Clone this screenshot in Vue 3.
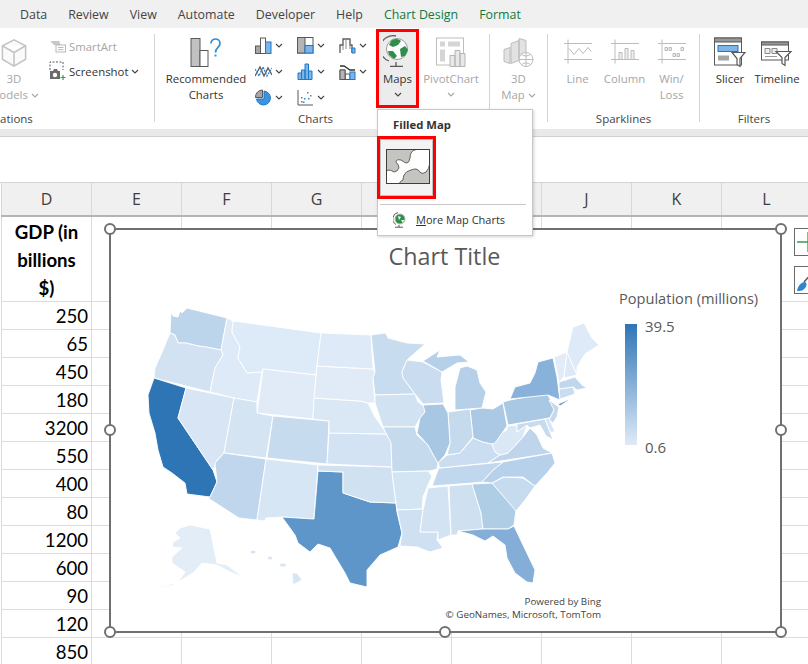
<script setup>
const tabs = [
  { t: 'Data' }, { t: 'Review' }, { t: 'View' }, { t: 'Automate' }, { t: 'Developer' }, { t: 'Help' },
  { t: 'Chart Design', g: true }, { t: 'Format', g: true }
]
const cols = ['D', 'E', 'F', 'G', 'H', 'I', 'J', 'K', 'L']
const values = [250, 65, 450, 180, 3200, 550, 400, 80, 1200, 600, 90, 120, 850]
const states = [
  ['#bdd5eb', '171,312 173,316 178,317 180,311 182,313 187,308 227,318 221,350 206,347 198,346 186,343 178,343 175,335 170,333'],
  ['#d2e2f2', '170,333 175,335 178,343 186,343 198,346 206,347 221,350 223,355 215,368 210,392 154,378 155,368 163,350'],
  ['#2e75b6', '154,378 186,388 178,418 213,470 217,482 210,497 187,494 185,483 172,473 163,467 158,450 155,433 149,413 148,395'],
  ['#d7e5f4', '186,388 234,398 224,453 217,460 213,470 178,418'],
  ['#deeaf7', '227,318 233,321 232,332 240,347 238,358 247,373 262,372 257,402 234,398 210,392 215,368 223,355 221,350'],
  ['#ddeaf7', '233,321 277,327 321,333 316,375 263,369 262,372 247,373 238,358 240,347 232,332'],
  ['#e0ebf7', '263,369 316,375 313,419 257,413'],
  ['#d5e4f3', '234,398 257,402 257,413 273,416 266,458 224,453'],
  ['#c7dbef', '273,416 329,421 327,464 267,458'],
  ['#c0d6ec', '224,453 266,459 257,520 239,518 208,498 210,497 217,482 215,463'],
  ['#d7e6f4', '266,459 318,465 314,519 282,517 266,518 265,521 257,520'],
  ['#5f96c9', '318,471 343,472 343,493 370,502 396,503 397,512 402,533 398,547 380,555 367,570 367,587 350,583 345,573 330,548 318,544 310,552 298,543 295,535 282,517 314,519'],
  ['#d0e1f2', '318,465 392,467 393,480 396,503 370,502 343,493 343,472 318,471'],
  ['#d4e3f3', '329,433 387,434 391,442 392,467 327,464'],
  ['#dae7f5', '314,398 360,401 368,403 375,417 382,427 387,434 329,433 329,421 313,419'],
  ['#e0ebf7', '317,366 373,369 375,372 373,380 375,403 368,403 360,401 314,398'],
  ['#deeaf7', '321,333 371,335 373,369 317,366'],
  ['#c8dcef', '371,335 386,333 388,338 407,343 425,344 407,360 402,372 403,378 415,394 375,395 373,378 375,372'],
  ['#d1e2f2', '375,395 415,394 418,402 425,407 425,412 420,418 415,427 383,427 375,403'],
  ['#c6daee', '383,427 415,427 417,435 428,445 435,458 438,463 437,469 430,471 392,472 391,443'],
  ['#d3e4f3', '392,472 428,471 432,476 428,485 423,497 422,509 397,510 396,503'],
  ['#cee0f1', '397,510 423,509 420,532 438,532 437,540 443,548 430,552 417,547 400,546 402,533'],
  ['#d3e3f3', '428,488 448,486 451,535 438,540 438,532 420,532 423,510'],
  ['#cfe0f1', '449,486 472,484 481,513 483,529 458,531 457,535 451,535'],
  ['#b0cde6', '472,484 492,483 516,510 514,525 508,529 483,529 481,513'],
  ['#84aed7', '458,531 483,529 508,529 514,526 523,545 535,570 533,583 527,582 515,573 507,558 505,545 493,536 485,541 473,535'],
  ['#c7dbef', '492,483 504,477 523,478 535,486 525,500 516,511'],
  ['#b6d1e9', '482,482 492,483 503,477 523,477 535,486 547,473 555,463 552,453 503,462 493,470'],
  ['#c1d7ed', '432,486 438,470 439,468 503,462 493,470 482,482 473,483'],
  ['#cbddf0', '438,463 447,455 460,453 473,438 483,442 492,444 495,452 500,455 488,463 440,468'],
  ['#bed5ec', '488,463 500,455 508,453 523,437 530,428 537,435 543,448 552,453'],
  ['#dae7f5', '492,444 498,435 507,430 507,426 517,425 517,432 527,425 523,437 508,453 500,455 495,452'],
  ['#abc9e4', '470,410 482,408 493,409 503,403 507,426 495,443 492,444 483,442 473,438'],
  ['#c6daee', '448,412 470,409 473,437 460,453 447,455 450,443'],
  ['#a7c7e3', '423,405 443,404 448,413 450,443 445,455 438,463 435,458 428,445 417,433 420,418 425,412'],
  ['#c9dcf0', '402,372 407,360 423,362 442,372 441,380 444,403 423,404 415,394 403,378'],
  ['#b6d0e9', '423,361 440,350 437,357 460,355 469,362 457,363 442,372'],
  ['#b6d0e9', '455,387 460,368 467,366 477,370 480,383 486,392 482,408 455,410'],
  ['#a9c8e4', '503,402 510,400 547,393 550,399 555,408 550,418 508,425'],
  ['#88b2da', '510,399 515,387 530,383 535,373 538,362 553,358 557,377 560,400 548,395'],
  ['#5f96c9', '558,404 572,398 560,406'],
  ['#c4d9ed', '549,400 559,407 557,417 553,423 549,420 554,410'],
  ['#c7dbef', '507,426 545,419 550,432 553,440 546,436 540,425 530,428 527,425 517,432 517,425'],
  ['#d7e6f4', '545,419 549,418 555,432 550,432'],
  ['#c9dcf0', '559,389 573,387 575,394 560,399'],
  ['#c1d7ed', '559,382 575,377 582,385 587,388 577,390 573,387 559,389'],
  ['#e1ecf8', '554,357 567,352 564,377 559,382'],
  ['#dde9f6', '567,352 577,375 564,378'],
  ['#deeaf7', '567,352 573,327 584,323 592,338 599,345 585,354 577,367 577,375'],
  ['#e2edf8', '180,528 190,525 210,529 217,563 227,565 243,577 230,572 217,565 202,563 193,573 173,585 150,590 178,582 185,572 172,563 172,557 182,548 172,547 173,542 180,538 175,533'],
  ['#d7e6f4', '292,573 297,573 302,580 293,585']
]
</script>

<template>
  <div class="app">
    <nav class="tabs">
      <span v-for="tab in tabs" :key="tab.t" class="tab" :class="{ green: tab.g }">{{ tab.t }}</span>
    </nav>

    <section class="ribbon">
      <div class="group g-ill">
        <div class="body">
          <div class="big dim models">
            <svg class="bigicon" width="30" height="32" viewBox="0 0 30 32"><path d="M15 3 27 9v14l-12 7-12-7V9zM3 9l12 7 12-7M15 16v14" fill="#fafafa" stroke="#c4c4c4" stroke-width="1.6"/></svg>
            <span>3D</span>
            <span class="nowrap">Models<svg class="chev" viewBox="0 0 8 5"><path d="M1 1l3 3 3-3"/></svg></span>
          </div>
          <div class="smallcol">
            <div class="small dim">
              <svg width="17" height="14" viewBox="0 0 17 14"><path d="M1 2h9l2 4H5z" fill="#c8c8c8"/><rect x="7" y="6" width="9.500" height="7" fill="#fff" stroke="#b8b8b8"/><path d="M9 8.500h5.500M9 10.700h5.500" stroke="#b8b8b8"/></svg>
              <span>SmartArt</span>
            </div>
            <div class="small">
              <svg width="17" height="20" viewBox="0 0 17 20"><path d="M1 9V1h13v8" fill="none" stroke="#595959" stroke-dasharray="2 1.500"/><path d="M1 10h3l1-2h3l1 2h2v8H1z" fill="#6b6b6b"/><circle cx="6" cy="14" r="2.200" fill="#fff"/><path d="M14 14v5M11.500 16.500h5" stroke="#3a9a50" stroke-width="1.200"/></svg>
              <span>Screenshot</span>
              <svg class="chev tight" viewBox="0 0 8 5"><path d="M1 1l3 3 3-3"/></svg>
            </div>
          </div>
        </div>
        <div class="glabel lab-ill">ations</div>
      </div>

      <div class="group g-charts">
        <div class="body">
          <div class="big recommended">
            <svg class="bigicon" width="32" height="30" viewBox="0 0 32 30"><rect x="1" y="1" width="9" height="28" fill="#c1c1c1" stroke="#595959"/><rect x="10" y="13" width="8" height="16" fill="#fff" stroke="#595959"/><path d="M21 6c0-6 9-6 9 0 0 4-4.500 4-4.500 9" fill="none" stroke="#2e8fd8" stroke-width="1.700"/><rect x="24.600" y="17" width="1.900" height="2" fill="#2e8fd8"/></svg>
            <span>Recommended</span>
            <span>Charts</span>
          </div>
          <div class="chartgrid">
            <div class="ci"><svg viewBox="0 0 17 17"><rect x=".5" y="9" width="5" height="7.500" fill="#a6a6a6" stroke="#595959"/><rect x="5.500" y="1" width="5" height="15.500" fill="#fff" stroke="#595959"/><rect x="10.500" y="5" width="5.500" height="11.500" fill="#7db5e8" stroke="#1f78c8"/></svg><svg class="chev" viewBox="0 0 8 5"><path d="M1 1l3 3 3-3"/></svg></div>
            <div class="ci"><svg viewBox="0 0 17 17"><rect x=".5" y=".5" width="15.500" height="15.500" fill="#fff" stroke="#595959"/><rect x=".5" y=".5" width="7.500" height="15.500" fill="#b5b5b5" stroke="#595959"/><rect x="8" y="8.500" width="8" height="7.500" fill="#7db5e8" stroke="#1f78c8"/></svg><svg class="chev" viewBox="0 0 8 5"><path d="M1 1l3 3 3-3"/></svg></div>
            <div class="ci"><svg viewBox="0 0 17 17"><path d="M1 16V8h3V2h7v6h2v8" fill="none" stroke="#595959" stroke-width="1.300"/><path d="M4 8v5M7 2v10M11 2v10" fill="none" stroke="#8a8a8a"/><path d="M13 11h3v5h-3z" fill="#7db5e8" stroke="#1f78c8"/></svg><svg class="chev" viewBox="0 0 8 5"><path d="M1 1l3 3 3-3"/></svg></div>
            <div class="ci"><svg viewBox="0 0 17 17"><path d="M0 13 5 4l4 9 4-8 4 7" fill="none" stroke="#595959" stroke-width="1.300"/><path d="M0 6l4 7 4-9 4 9 5-8" fill="none" stroke="#2e86d0" stroke-width="1.300" stroke-dasharray="2 1"/></svg><svg class="chev" viewBox="0 0 8 5"><path d="M1 1l3 3 3-3"/></svg></div>
            <div class="ci"><svg viewBox="0 0 17 17"><path d="M1 16.500V10h3.500v6.500zM4.500 16.500V7H8v9.500zM8 16.500V1h3.500v15.500zM11.500 16.500V8H15v8.500z" fill="#7db5e8" stroke="#1f78c8"/></svg><svg class="chev" viewBox="0 0 8 5"><path d="M1 1l3 3 3-3"/></svg></div>
            <div class="ci"><svg viewBox="0 0 17 17"><path d="M1 7h5v9.500H1zM6 11h5v5.500H6z" fill="#fff" stroke="#595959"/><rect x="11" y="9" width="5" height="7.500" fill="#7db5e8" stroke="#1f78c8"/><rect x="1" y="7" width="5" height="9.500" fill="#b5b5b5" stroke="#595959"/><path d="M1 3h4l6 4h5" fill="none" stroke="#333" stroke-width="1.300"/></svg><svg class="chev" viewBox="0 0 8 5"><path d="M1 1l3 3 3-3"/></svg></div>
            <div class="ci"><svg viewBox="0 0 17 17"><path d="M7.500 1A7 7 0 0 0 .5 8.500h7z" fill="#a6a6a6" stroke="#595959"/><path d="M9 2a7 7 0 1 1-7.500 8H9z" fill="#3d93dc" stroke="#1f78c8"/></svg><svg class="chev" viewBox="0 0 8 5"><path d="M1 1l3 3 3-3"/></svg></div>
            <div class="ci"><svg viewBox="0 0 17 17"><path d="M1 1v15h15" fill="none" stroke="#595959"/><g fill="#2e86d0"><rect x="4" y="12" width="1.500" height="1.500"/><rect x="7" y="9" width="1.500" height="1.500"/><rect x="6" y="12.500" width="1.500" height="1.500"/><rect x="11" y="9" width="1.500" height="1.500"/></g><g fill="#7a7a7a"><rect x="4" y="8" width="1.500" height="1.500"/><rect x="10" y="3" width="1.500" height="1.500"/><rect x="13" y="6" width="1.500" height="1.500"/></g></svg><svg class="chev" viewBox="0 0 8 5"><path d="M1 1l3 3 3-3"/></svg></div>
          </div>
          <div class="big maps">
            <svg class="globe" width="30" height="33" viewBox="0 0 30 33">
              <circle cx="14" cy="15" r="10.500" fill="#fff" stroke="#9a9a9a"/>
              <path d="M8 7c4-3 8-2 10 0l-3 4-5 2-4-2zM5 17l5 0 4 5-3 3-5-4zM17 15l5-3 3 4-3 6-4 1z" fill="#2f8f4a"/>
              <path d="M13 2A13 13 0 0 0 6 27" fill="none" stroke="#595959" stroke-width="1.300"/>
              <path d="M13 28v4M7 32.500h13" stroke="#595959" stroke-width="1.300"/>
            </svg>
            <span>Maps</span>
            <svg class="chev lone" viewBox="0 0 8 5"><path d="M1 1l3 3 3-3"/></svg>
          </div>
          <div class="big dim pivot">
            <svg class="bigicon" width="30" height="30" viewBox="0 0 30 30"><rect x=".5" y=".5" width="27" height="27" fill="#fff" stroke="#bdbdbd"/><rect x="4" y="4" width="5" height="5" fill="#d5d5d5"/><rect x="12" y="4" width="12" height="5" fill="#d5d5d5"/><rect x="4" y="12" width="5" height="12" fill="#d5d5d5"/><path d="M14 18h5v11h-5zM19 13h5v16h-5zM24 16h5v13h-5z" fill="#e8e8e8" stroke="#b5b5b5"/></svg>
            <span>PivotChart</span>
            <svg class="chev lone" viewBox="0 0 8 5"><path d="M1 1l3 3 3-3"/></svg>
          </div>
        </div>
        <div class="glabel lab-charts">Charts</div>
      </div>

      <div class="group g-map">
        <div class="body">
          <div class="big dim map3d">
            <svg class="bigicon" width="32" height="30" viewBox="0 0 32 30"><path d="M1 12l6-2v16l-6-2zM8 6l8-3v20l-8 3zM16 1l7 2v17h-7z" fill="#e2e2e2" stroke="#bcbcbc"/><circle cx="23" cy="22" r="7" fill="#fff" stroke="#bcbcbc"/><path d="M16 22h14M23 15v14M18.500 17c3 2 6 2 9 0M18.500 27c3-2 6-2 9 0" fill="none" stroke="#bcbcbc"/></svg>
            <span>3D</span>
            <span class="nowrap">Map<svg class="chev" viewBox="0 0 8 5"><path d="M1 1l3 3 3-3"/></svg></span>
          </div>
        </div>
      </div>

      <div class="group g-spark">
        <div class="body">
          <div class="big dim spark">
            <svg class="bigicon sp" width="28" height="26" viewBox="0 0 28 26"><path d="M4 0v24M0 4h28M0 20h28" stroke="#bcbcbc" fill="none"/><path d="M5 9l5 6 5-6 4 5 5-6 3 4" fill="none" stroke="#bcbcbc"/></svg>
            <span>Line</span>
          </div>
          <div class="big dim spark">
            <svg class="bigicon sp" width="28" height="26" viewBox="0 0 28 26"><path d="M4 0v24M0 4h28M0 20h28" stroke="#bcbcbc" fill="none"/><path d="M8 13h3v7H8zM14 9h3v11h-3zM20 11h3v9h-3z" fill="#eee" stroke="#bcbcbc"/></svg>
            <span>Column</span>
          </div>
          <div class="big dim spark">
            <svg class="bigicon sp" width="28" height="26" viewBox="0 0 28 26"><path d="M4 0v24M0 4h28M0 20h28" stroke="#bcbcbc" fill="none"/><path d="M7 8h2.500v3H7zM11 8h2.500v3H11zM15 14h2.500v3H15zM19 14h2.500v3H19zM23 8h2.500v3H23z" fill="#eee" stroke="#bcbcbc"/></svg>
            <span>Win/</span>
            <span>Loss</span>
          </div>
        </div>
        <div class="glabel lab-spark">Sparklines</div>
      </div>

      <div class="group g-filter">
        <div class="body">
          <div class="big slicer">
            <svg class="bigicon" width="32" height="30" viewBox="0 0 32 30"><rect x=".5" y=".5" width="27" height="27" fill="#fff" stroke="#595959"/><rect x=".5" y=".5" width="27" height="4" fill="#999" stroke="#595959"/><rect x="4" y="8" width="20" height="6" fill="#7db5e8" stroke="#1f78c8"/><rect x="4" y="18" width="11" height="5" fill="#a6a6a6"/><path d="M18 15h13l-5 6v8l-3-2v-6z" fill="#fff" stroke="#595959" stroke-width="1.200"/></svg>
            <span>Slicer</span>
          </div>
          <div class="big timeline">
            <svg class="bigicon" width="32" height="30" viewBox="0 0 32 30"><rect x=".5" y="4.500" width="27" height="18" fill="#fff" stroke="#595959"/><rect x=".5" y="4.500" width="27" height="3" fill="#999" stroke="#595959"/><path d="M4 11h5v5H4zM11 11h5v5h-5z" fill="#eee" stroke="#8a8a8a"/><path d="M4 19h12" stroke="#9a9a9a"/><path d="M15 14h15l-6 6v8l-3-2v-6z" fill="#fff" stroke="#595959" stroke-width="1.200"/></svg>
            <span>Timeline</span>
          </div>
        </div>
        <div class="glabel lab-filter">Filters</div>
      </div>
    </section>

    <div class="band"></div>
    <div class="formula"></div>

    <div class="sheet">
      <div class="headrow">
        <div v-for="c in cols" :key="c" class="colhead">{{ c }}</div>
      </div>
      <div class="row first">
        <div v-for="c in cols" :key="c" class="cell title-cell">
          <template v-if="c === 'D'">GDP (in<br>billions<br>$)</template>
        </div>
      </div>
      <div v-for="v in values" :key="v" class="row">
        <div v-for="c in cols" :key="c" class="cell num">{{ c === 'D' ? v : '' }}</div>
      </div>

      <div class="chart">
        <svg class="mapsvg" viewBox="110 229 671 403" width="671" height="403">
          <polygon v-for="(s, i) in states" :key="i" :points="s[1]" :fill="s[0]" stroke="#fff" stroke-width=".9" stroke-linejoin="round" />
          <ellipse cx="253" cy="552" rx="2.500" ry="1.500" fill="#d7e6f4" />
          <ellipse cx="270" cy="558" rx="2.200" ry="1.600" fill="#d7e6f4" />
          <ellipse cx="283" cy="565" rx="3" ry="1.500" fill="#d7e6f4" />
        </svg>
        <div class="ctitle">Chart Title</div>
        <div class="legend">
          <div class="ltitle">Population (millions)</div>
          <div class="lbody">
            <div class="lbar"></div>
            <div class="lnums"><span>39.5</span><span>0.6</span></div>
          </div>
        </div>
        <div class="attrib">
          <div>Powered by Bing</div>
          <div>© GeoNames, Microsoft, TomTom</div>
        </div>
        <i class="h tl"></i><i class="h tr"></i><i class="h bl"></i><i class="h br"></i>
        <i class="h ml"></i><i class="h mr"></i><i class="h bm"></i>
      </div>

      <div class="sidebtn plus"><svg width="28" height="26" viewBox="0 0 28 26"><path d="M13 3v20M2 13h22" stroke="#3a9a50" stroke-width="1.300" fill="none"/></svg></div>
      <div class="sidebtn brush"><svg width="28" height="26" viewBox="0 0 28 26"><path d="M2 24c1-6 5-9 8-9 2 1 2 4 0 6-2 3-5 3-8 3z" fill="#2e86d0"/><path d="M9 15 20 3" stroke="#595959" stroke-width="1.500"/></svg></div>
    </div>

    <div class="dropdown">
      <div class="ddtitle">Filled Map</div>
      <div class="tilewrap">
        <div class="tile">
          <svg width="44" height="35" viewBox="385 149 44 35">
            <rect x="385" y="149" width="44" height="35" fill="#fff"/>
            <path d="M385 149h32q-6 1-7 4t-1 5q-1 5-3 5-2 0-6-3-5-1-5 2 3 3 3 6-2 4-5 4-3-2-5-2l-3 1z" fill="#c6c4c1" stroke="#555" stroke-width=".9" stroke-linejoin="round"/>
            <path d="M429 163q-1 6-4 9-3 2-5 1-3-4-5-4-3 0-5 1-5 1-7 5-1 3-1 5-3 1-4 4h31z" fill="#c6c4c1" stroke="#555" stroke-width=".9" stroke-linejoin="round"/>
            <rect x="385.500" y="149.500" width="43" height="34" fill="none" stroke="#3d3d3d"/>
          </svg>
        </div>
      </div>
      <div class="ddsep"></div>
      <div class="ddmore">
        <svg width="14" height="16" viewBox="0 0 14 16"><circle cx="7" cy="7" r="5" fill="#2f8f4a" stroke="#bbb"/><path d="M5 4l3 1-2 3zM8 8l3 0-1 3z" fill="#fff"/><path d="M5 .5A6.500 6.500 0 0 0 3 12.500M6 13v2M2 15.200h8" fill="none" stroke="#595959"/></svg>
        <span><u>M</u>ore Map Charts</span>
      </div>
    </div>
  </div>
</template>

<style>
html, body { margin: 0; padding: 0; background: #fff; overflow: hidden; }
</style>

<style scoped>
.app {
  position: relative;
  width: 808px;
  height: 664px;
  overflow: hidden;
  background: #fff;
  font-family: "Open Sans", "Noto Sans", sans-serif;
  color: #3b3b3b;
}
.tabs {
  height: 28px;
  background: #f0f0f0;
  display: flex;
  align-items: center;
  padding-left: 20px;
  gap: 21px;
  font-size: 12.400px;
  color: #444;
}
.tab.green { color: #10793f; }
.ribbon {
  height: 101px;
  display: flex;
  background: #fff;
  padding: 6px 0 7px;
  box-sizing: border-box;
  font-size: 11.400px;
  color: #333;
}
.group {
  position: relative;
  display: flex;
  flex-direction: column;
  border-right: 1px solid #d4d4d4;
  box-sizing: border-box;
}
.g-ill { width: 155px; }
.g-charts { width: 335px; }
.g-map { width: 58px; }
.g-spark { width: 152px; }
.g-filter { flex: 1; border-right: 0; }
.body { display: flex; flex: none; height: 70px; }
.glabel {
  text-align: center;
  font-size: 11.500px;
  line-height: 14px;
  color: #444;
  margin-top: auto;
  margin-bottom: -4px;
}
.lab-ill { text-align: left; }
.lab-charts { margin-left: 143px; text-align: left; }
.lab-spark { text-align: center; }
.big {
  display: flex;
  flex-direction: column;
  align-items: center;
  line-height: 16px;
  white-space: nowrap;
  box-sizing: border-box;
}
.bigicon { height: 31px; margin: 3px 0 3px; display: block; flex: none; }
.dim { color: #a6a6a6; }
.nowrap { white-space: nowrap; }
.chev {
  width: 8px; height: 5px; margin-left: 3px; flex: none; vertical-align: 1px;
  fill: none; stroke: #444; stroke-width: 1.100;
}
.chev.tight { margin-left: 0; }
.dim .chev { stroke: #a6a6a6; }
.lone { margin: 5px 0 0; }
.models { width: 50px; margin-left: -11px; }
.smallcol { margin-left: 10px; padding-top: 3px; display: flex; flex-direction: column; gap: 7px; }
.small { display: flex; align-items: center; gap: 3px; height: 18px; white-space: nowrap; }
.recommended { width: 84px; margin-left: 9px; }
.chartgrid {
  display: grid;
  grid-template-columns: repeat(3, 42px);
  grid-template-rows: repeat(3, 26px);
  margin: -2px 0 0 7px;
  width: 126px;
}
.ci { display: flex; align-items: center; }
.ci > svg:first-child { width: 17px; height: 17px; flex: none; }
.ci .chev { margin-left: 3px; }
.maps {
  width: 43px;
  height: 79px;
  margin: -5px 0 0 -5px;
  border: 3px solid #f00;
  background: #ececec;
  color: #333;
}
.globe { margin-top: 2px; height: 33px; margin-bottom: 4px; flex: none; }
.pivot { width: 64px; margin-left: 0; }
.map3d { width: 58px; }
.spark { width: 47px; margin-left: 0; }
.g-spark .body { padding-left: 6px; }
.slicer { width: 48px; margin-left: 6px; }
.timeline { width: 46px; margin-left: 0; }

.band { height: 8px; background: #e9e9e9; border-bottom: 1px solid #d0d0d0; box-sizing: border-box; }
.formula { height: 46px; background: #fff; border-bottom: 1px solid #d4d4d4; box-sizing: border-box; }

.sheet { position: relative; padding-left: 1px; }
.headrow { display: flex; height: 34px; background: #f0f0f0; border-bottom: 2px solid #b4b4b4; box-sizing: border-box; }
.colhead {
  flex: none; width: 90px; box-sizing: border-box;
  border-right: 1px solid #d8d8d8;
  text-align: center;
  font-size: 16px;
  line-height: 32px;
  color: #3f3f3f;
}
.colhead:first-child { width: 91px; border-left: 1px solid #d8d8d8; }
.row { display: flex; height: 28px; }
.row.first { height: 85px; }
.cell {
  flex: none; width: 90px; box-sizing: border-box;
  border-right: 1px solid #dcdcdc;
  border-bottom: 1px solid #dcdcdc;
  font-family: Lato, "Open Sans", sans-serif;
  font-size: 18.600px;
  color: #000;
}
.cell:first-child { width: 91px; border-left: 1px solid #dcdcdc; }
.title-cell { font-weight: 700; line-height: 28px; padding-top: 1px; text-align: center; }
.num { line-height: 29px; text-align: right; padding-right: 3px; }

.chart {
  position: absolute;
  left: 109px;
  top: 45px;
  width: 673px;
  height: 405px;
  box-sizing: border-box;
  border: 2px solid #707070;
  background: #fff;
}
.mapsvg { position: absolute; left: -1px; top: -1px; display: block; }
.ctitle {
  position: relative;
  text-align: center;
  font-size: 23.300px;
  line-height: 30px;
  margin: 11px 2px 0 0;
  color: #595959;
}
.legend { position: absolute; left: 508px; top: 58px; color: #595959; }
.ltitle { font-size: 14.600px; line-height: 20px; white-space: nowrap; }
.lbody { display: flex; margin: 16px 0 0 6px; gap: 8px; height: 122px; }
.lbar { width: 12px; height: 121px; background: linear-gradient(#2e75b6, #dfeaf7); }
.lnums { display: flex; flex-direction: column; justify-content: space-between; font-size: 15px; line-height: 16px; margin-top: -6px; height: 137px; }
.attrib { position: absolute; right: 179px; top: 365px; text-align: right; font-size: 9.800px; line-height: 13px; color: #444; white-space: nowrap; }
.h {
  position: absolute;
  width: 12px; height: 12px;
  box-sizing: border-box;
  border: 2px solid #707070;
  border-radius: 50%;
  background: #fff;
}
.tl { left: -7px; top: -7px; }
.tr { right: -7px; top: -7px; }
.bl { left: -7px; bottom: -7px; }
.br { right: -7px; bottom: -7px; }
.ml { left: -7px; top: 194px; }
.mr { right: -7px; top: 194px; }
.bm { left: 328px; bottom: -7px; }
.sidebtn {
  position: absolute;
  left: 794px;
  width: 30px; height: 28px;
  box-sizing: border-box;
  border: 1px solid #6a6a6a;
  background: #fff;
}
.sidebtn svg { display: block; }
.plus { top: 45px; }
.brush { top: 83px; }

.dropdown {
  position: absolute;
  left: 377px;
  top: 109px;
  width: 156px;
  height: 127px;
  box-sizing: border-box;
  background: #fff;
  border: 1px solid #c8c8c8;
  box-shadow: 1px 1px 3px rgba(0, 0, 0, .18);
  padding: 0 0 0 1px;
  font-size: 11px;
  color: #333;
}
.ddtitle { font-weight: 700; font-size: 11.300px; line-height: 16px; margin: 7px 0 0 14px; }
.tilewrap {
  width: 59px; height: 63px;
  margin: 3px 0 0 -2px;
  border: 3px solid #f00;
  box-sizing: border-box;
  position: relative;
}
.tile {
  width: 53px; height: 57px;
  box-sizing: border-box;
  background: #f3f3f3;
  border: 1px solid #c0c0c0;
  padding: 9px 0 0 5px;
}
.tile svg { display: block; }
.ddsep { height: 1px; background: #c8c8c8; margin: 5px 6px 0 1px; }
.ddmore { display: flex; align-items: center; gap: 9px; margin: 7px 0 0 14px; line-height: 16px; }
.ddmore svg { flex: none; }
</style>
